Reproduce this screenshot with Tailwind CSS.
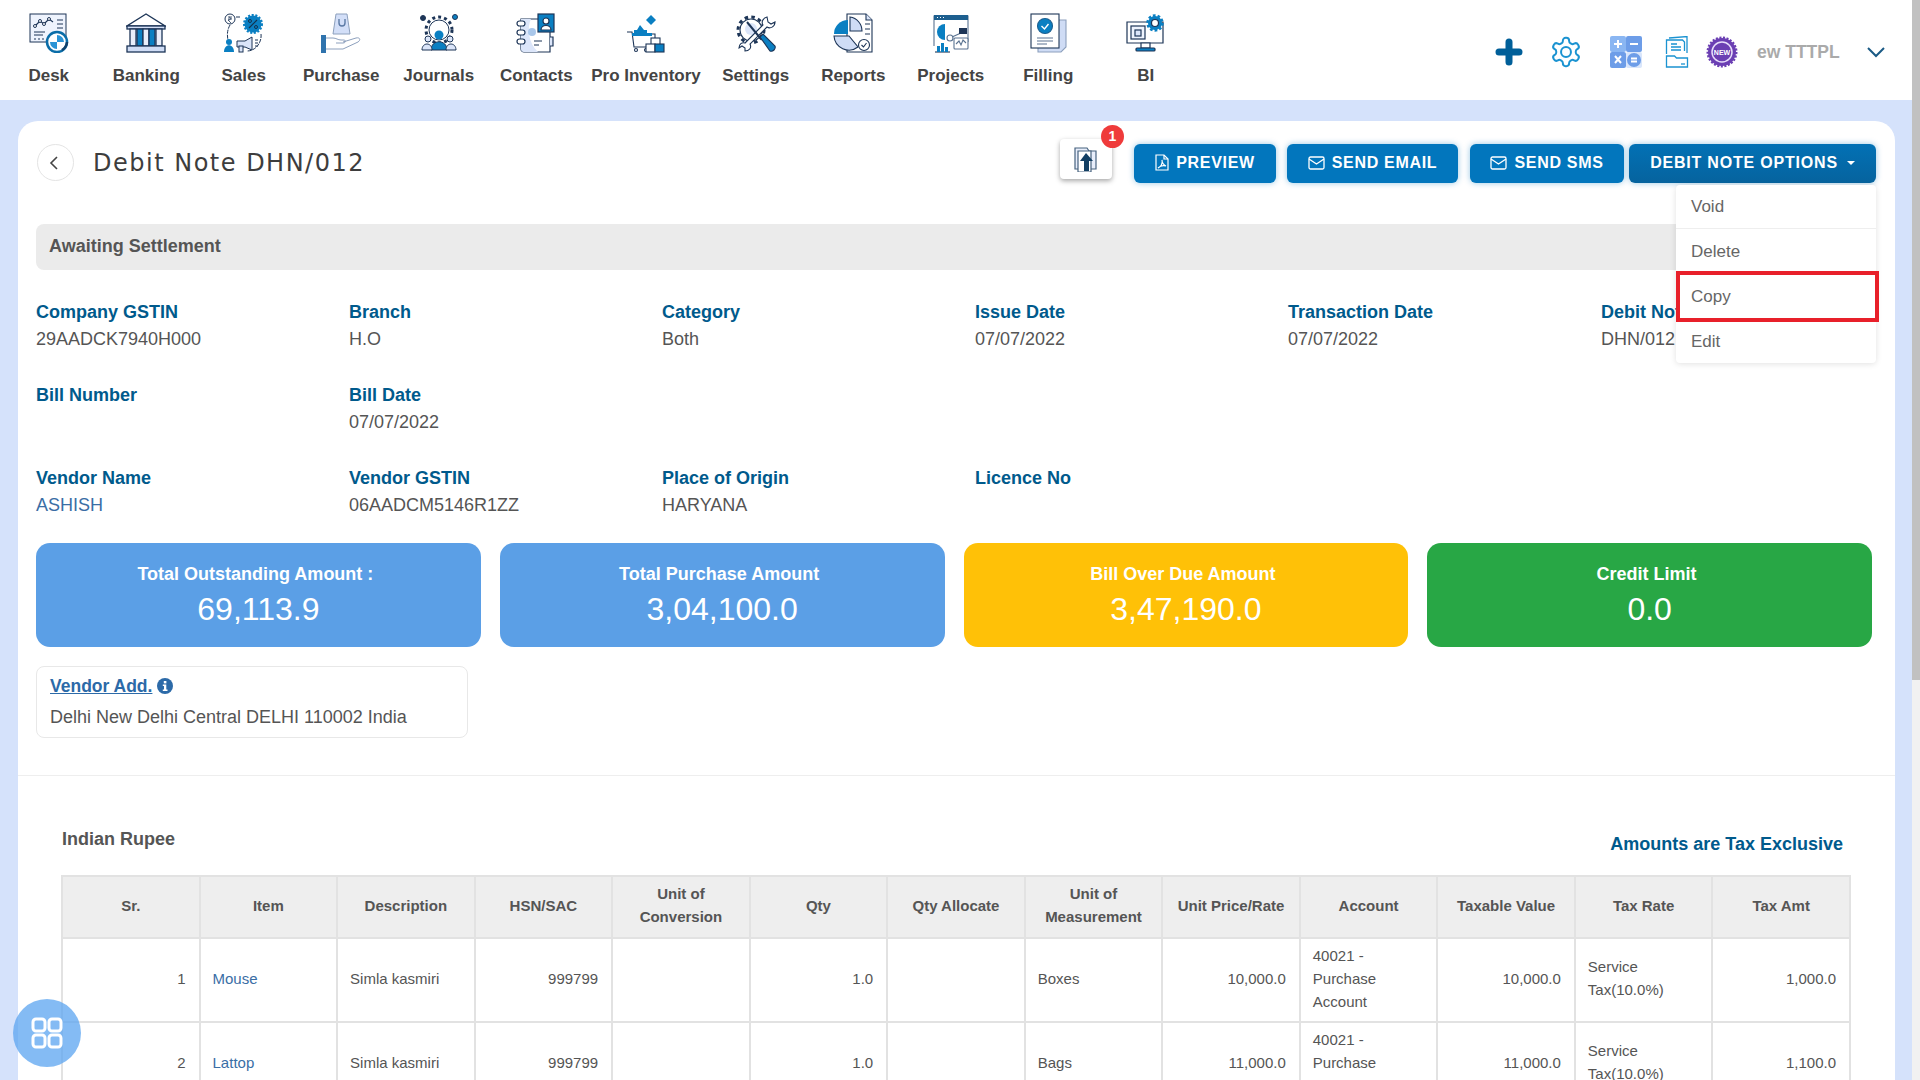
<!DOCTYPE html>
<html lang="en">
<head>
  <meta charset="UTF-8" />
  <title>Debit Note DHN/012</title>
  <script src="https://cdn.jsdelivr.net/npm/@tailwindcss/browser@4"></script>
</head>
<body class="relative w-[1920px] h-[1080px] overflow-hidden bg-[#d5e2fb] font-['Liberation_Sans',Arial,sans-serif] text-[18px] text-[#555]">

  <!-- Top nav -->
  <nav class="flex items-start h-[100px] bg-white">
    <a class="flex flex-col items-center w-[97.5px] pt-[13px]">
      <svg class="w-10 h-10" viewBox="0 0 40 40" fill="none" stroke="#1d3557" stroke-width="1">
        <rect x="1" y="1" width="36" height="28" fill="#eef3fd"/>
        <polyline points="6,13 11,8 15,11 20,6 24,9" stroke-width="1.2"/>
        <circle cx="6" cy="13" r="1.5" fill="#fff"/><circle cx="11" cy="8" r="1.5" fill="#fff"/><circle cx="15" cy="11" r="1.5" fill="#fff"/><circle cx="20" cy="6" r="1.5" fill="#fff"/>
        <path d="M28 7h6M28 11h6M28 15h6M5 19h11M5 22h9M5 26h2M9 26h2M13 26h2"/>
        <circle cx="28" cy="29" r="10" fill="#fff" stroke="#0a6da8" stroke-width="2.5"/>
        <path d="M28 22a7 7 0 0 1 7 7h-7zM28 29h-7a7 7 0 0 0 7 7z" fill="#2a93d5" stroke="none"/>
        <path d="M33 37a10 10 0 0 0 5-8" stroke="#11406a" stroke-width="2.5"/>
      </svg>
      <span class="mt-[11px] text-[17px] leading-[24px] font-bold text-[#444]">Desk</span>
    </a>
    <a class="flex flex-col items-center w-[97.5px] pt-[13px]">
      <svg class="w-10 h-10" viewBox="0 0 40 40" fill="none" stroke="#1d3557" stroke-width="1.3">
        <path d="M20 1 1 13h38z" fill="#fff"/>
        <rect x="1" y="13" width="38" height="3" fill="#d5e0f8"/>
        <rect x="4" y="16" width="6" height="17" fill="#e8eefb"/>
        <rect x="11" y="16" width="6" height="17" fill="#0a7fc2"/>
        <rect x="17" y="16" width="6" height="17" fill="#e8eefb"/>
        <rect x="23" y="16" width="6" height="17" fill="#0a7fc2"/>
        <rect x="30" y="16" width="6" height="17" fill="#e8eefb"/>
        <rect x="1" y="33" width="38" height="6" fill="#cfdcf5"/>
      </svg>
      <span class="mt-[11px] text-[17px] leading-[24px] font-bold text-[#444]">Banking</span>
    </a>
    <a class="flex flex-col items-center w-[97.5px] pt-[13px]">
      <svg class="w-10 h-10" viewBox="0 0 40 40" fill="none" stroke="#1d3557" stroke-width="1">
        <circle cx="29" cy="11" r="8.5" fill="#0a7fc2" stroke="#0a7fc2" stroke-width="3" stroke-dasharray="2 1.5"/>
        <path d="M25 15l8-8" stroke="#12324f" stroke-width="1.2"/>
        <circle cx="26" cy="8" r="1.5" stroke="#12324f"/><circle cx="32" cy="14" r="1.5" stroke="#12324f"/>
        <circle cx="6" cy="6" r="5" fill="#fff"/><path d="M4 4h4M4 6h4M5 4c3 1 2 3-1 3l3 3" stroke-width=".8"/>
        <path d="M12 4h5M6 12c-3 5-3 11-2 15M37 21c1 8-5 17-14 17" stroke-dasharray="4 1"/>
        <circle cx="5" cy="29" r="3" fill="#0a7fc2" stroke="none"/>
        <path d="M0 39c0-9 10-9 10 0z" fill="#0a7fc2" stroke="none"/>
        <path d="M13 28h8l7-4v13l-7-3h-8z" fill="#dbe5f9"/><rect x="15" y="33" width="4" height="6" fill="#dbe5f9"/>
        <path d="M31 27h3M31 30h3M31 33h3"/>
      </svg>
      <span class="mt-[11px] text-[17px] leading-[24px] font-bold text-[#444]">Sales</span>
    </a>
    <a class="flex flex-col items-center w-[97.5px] pt-[13px]">
      <svg class="w-10 h-10" viewBox="0 0 40 40" fill="none" stroke="#8da0bd" stroke-width="1">
        <path d="M15 1h11l3 20H12z" fill="#d3dff8"/>
        <path d="M18 6v4a3 3 0 0 0 6 0V6" stroke="#5c7aa5" stroke-width="1.4"/>
        <rect x="0" y="22" width="5" height="18" fill="#2f73ad" stroke="none"/>
        <path d="M5 25h7c3 0 5 2 8 2h3c2 0 2 3-1 3h-7M22 29l13-4c4-1 5 2 2 4l-15 7H5"/>
      </svg>
      <span class="mt-[11px] text-[17px] leading-[24px] font-bold text-[#444]">Purchase</span>
    </a>
    <a class="flex flex-col items-center w-[97.5px] pt-[13px]">
      <svg class="w-10 h-10" viewBox="0 0 40 40" fill="none" stroke="#1d3557" stroke-width="1">
        <circle cx="20" cy="17" r="13" stroke-width="3" stroke-dasharray="3 3"/>
        <circle cx="20" cy="17" r="10" fill="#fff"/>
        <circle cx="4" cy="5" r="2.5" fill="#1d3557"/><circle cx="36" cy="4" r="2.5" fill="#0a7fc2"/>
        <circle cx="20" cy="22" r="4.5" fill="#0a7fc2" stroke="none"/>
        <path d="M12 37c0-11 16-11 16 0z" fill="#0a7fc2"/>
        <circle cx="9" cy="26" r="3" fill="#dbe5f9"/><path d="M3 37c0-8 10-8 10 0z" fill="#dbe5f9"/>
        <circle cx="31" cy="26" r="3" fill="#dbe5f9"/><path d="M27 37c0-8 10-8 10 0z" fill="#dbe5f9"/>
      </svg>
      <span class="mt-[11px] text-[17px] leading-[24px] font-bold text-[#444]">Journals</span>
    </a>
    <a class="flex flex-col items-center w-[97.5px] pt-[13px]">
      <svg class="w-10 h-10" viewBox="0 0 40 40" fill="none" stroke="#1d3557" stroke-width="1.2">
        <path d="M5 6h29v33H8a3 3 0 0 1-3-3z" fill="#fff"/>
        <path d="M5 6h10c-4 8-3 24 7 33H8a3 3 0 0 1-3-3z" fill="#dce6fa" stroke="none"/>
        <rect x="22" y="1" width="16" height="18" fill="#0a7fc2"/>
        <circle cx="30" cy="8" r="3" fill="#fff"/><path d="M25 17c0-6 10-6 10 0z" fill="#fff"/>
        <rect x="1" y="8" width="8" height="5" rx="2.5" fill="#fff"/><rect x="1" y="17" width="8" height="5" rx="2.5" fill="#fff"/><rect x="1" y="26" width="8" height="5" rx="2.5" fill="#fff"/>
        <circle cx="16" cy="19" r="4" fill="#a9c7ea" stroke="none"/><path d="M18 28h8M18 32h5"/>
        <path d="M34 24h3v9h-3" fill="#dce6fa"/>
      </svg>
      <span class="mt-[11px] text-[17px] leading-[24px] font-bold text-[#444]">Contacts</span>
    </a>
    <a class="flex flex-col items-center w-[122px] pt-[13px]">
      <svg class="w-10 h-10" viewBox="0 0 40 40" fill="none" stroke="#1d3557" stroke-width="1.1">
        <path d="M25 2l5 5-5 5-5-5z" fill="#0a7fc2" stroke="none"/>
        <path d="M14 12l4 5h3v4H8v-4h3z" fill="#0a7fc2" stroke="none"/>
        <path d="M1 19h5l2 15h14M7 21h22v8" />
        <rect x="6" y="20" width="20" height="3" fill="#0a7fc2" stroke="none"/>
        <circle cx="10" cy="37" r="1.5"/><circle cx="20" cy="37" r="1.5"/>
        <rect x="25" y="25" width="9" height="8" fill="#fff"/>
        <rect x="20" y="31" width="9" height="8" fill="#fff"/>
        <rect x="29" y="31" width="9" height="8" fill="#0a7fc2"/>
      </svg>
      <span class="mt-[11px] text-[17px] leading-[24px] font-bold text-[#444] whitespace-nowrap">Pro Inventory</span>
    </a>
    <a class="flex flex-col items-center w-[97.5px] pt-[13px]">
      <svg class="w-10 h-10" viewBox="0 0 40 40" fill="none" stroke="#1d3557" stroke-width="1.1">
        <circle cx="15" cy="17" r="13" stroke-width="3" stroke-dasharray="3.5 3.3"/>
        <circle cx="15" cy="17" r="11" fill="#fff"/>
        <circle cx="15" cy="16" r="6" fill="#dbe5f9" stroke="none"/>
        <path d="M31 4c-4 1-6 5-4 8L9 30c-3-1-6 1-6 5l3-2 3 2 0 3c4 0 7-3 5-7L31 14c3 2 8 0 8-5l-4 2-3-2z" fill="#fff"/>
        <path d="M11 9l14 17" stroke-width="2"/>
        <path d="M24 24l3-3 12 12c1 3-2 6-5 5z" fill="#0a7fc2"/>
      </svg>
      <span class="mt-[11px] text-[17px] leading-[24px] font-bold text-[#444]">Settings</span>
    </a>
    <a class="flex flex-col items-center w-[97.5px] pt-[13px]">
      <svg class="w-10 h-10" viewBox="0 0 40 40" fill="none" stroke="#1d3557" stroke-width="1.1">
        <path d="M14 1h19l6 6v32H14z" fill="#fff"/>
        <path d="M33 1v6h6" fill="#dbe5f9"/>
        <path d="M32 11h5M32 16h5M32 21h5"/>
        <path d="M15 7v14H1A14 14 0 0 1 15 7z" fill="#0a7fc2" stroke="none"/>
        <path d="M17 4a14 14 0 0 1 12 14H17z" fill="#cfdcf5"/>
        <path d="M1 23h15l9 11a15 15 0 0 1-24-11z" fill="#cfdcf5"/>
        <circle cx="31" cy="32" r="5.5" fill="#fff"/><path d="M28.5 32l2 2 3-4"/>
      </svg>
      <span class="mt-[11px] text-[17px] leading-[24px] font-bold text-[#444]">Reports</span>
    </a>
    <a class="flex flex-col items-center w-[97.5px] pt-[13px]">
      <svg class="w-10 h-10" viewBox="0 0 40 40" fill="none" stroke="#5a7391" stroke-width="1.1">
        <path d="M3 33V3h34v26" fill="#fff"/>
        <rect x="3" y="2" width="34" height="5" fill="#1d5f8f" stroke="none"/>
        <path d="M6 4.500h1M9 4.500h1M12 4.500h1" stroke="#fff"/>
        <path d="M14 11a8 8 0 0 0 0 16z" fill="#0a7fc2" stroke="none"/>
        <circle cx="19" cy="25" r="3" fill="#fff"/><path d="M21 24l9-4"/>
        <rect x="28" y="15" width="8" height="6" fill="#1d3557" stroke="none"/>
        <rect x="23" y="25" width="14" height="11" rx="1" fill="#fff"/><path d="M25 31l3-3 2 4 2-5 3 3"/>
        <path d="M4 39h15" stroke="#1d3557"/>
        <path d="M6 33h3v6H6zM10 30h3v9h-3zM14 34h3v5h-3z" fill="#0a7fc2" stroke="none"/>
      </svg>
      <span class="mt-[11px] text-[17px] leading-[24px] font-bold text-[#444]">Projects</span>
    </a>
    <a class="flex flex-col items-center w-[97.5px] pt-[13px]">
      <svg class="w-10 h-10" viewBox="0 0 40 40" fill="none" stroke="#1d3557" stroke-width="1.1">
        <path d="M10 7h28v27l-5 5H10z" fill="#cfdcf5" stroke="#8da0bd"/>
        <rect x="3" y="1" width="28" height="34" fill="#fff"/>
        <circle cx="17" cy="13" r="7.500" fill="#0a7fc2" stroke="#1d5f8f"/>
        <path d="M13.500 13l3 3 4-5" stroke="#fff" stroke-width="1.4"/>
        <path d="M9 25h16M9 28h16M9 31h10" stroke="#5a7391"/>
      </svg>
      <span class="mt-[11px] text-[17px] leading-[24px] font-bold text-[#444]">Filling</span>
    </a>
    <a class="flex flex-col items-center w-[97.5px] pt-[13px]">
      <svg class="w-10 h-10" viewBox="0 0 40 40" fill="none" stroke="#1d3557" stroke-width="1.2">
        <path d="M1 9h36v21H1z" fill="#fff"/>
        <path d="M15 30h9v5h-9z" fill="#fff"/>
        <rect x="10" y="35" width="19" height="3" rx="1" fill="#0a7fc2"/>
        <rect x="5" y="13" width="14" height="13" fill="#eef3fd"/><rect x="9" y="17" width="6" height="6" fill="#dbe5f9"/>
        <circle cx="29" cy="10" r="7" fill="#0a7fc2" stroke="#0a7fc2" stroke-width="3.500" stroke-dasharray="2.500 1.900"/>
        <circle cx="29" cy="10" r="3.500" fill="#fff"/>
      </svg>
      <span class="mt-[11px] text-[17px] leading-[24px] font-bold text-[#444]">BI</span>
    </a>

    <!-- Right side tools -->
    <div class="flex items-center ml-auto mr-[35px] mt-[34px] h-[36px]">
      <svg class="w-[28px] h-[28px]" viewBox="0 0 28 28" fill="none" stroke="#005f99" stroke-width="7" stroke-linecap="round"><path d="M14 4v20M4 14h20"/></svg>
      <svg class="w-[34px] h-[34px] ml-[26px]" viewBox="0 0 24 24" fill="none" stroke="#1b93d1" stroke-width="1.4" stroke-linejoin="round">
        <path d="M12.220 2h-.44a2 2 0 0 0-2 2v.18a2 2 0 0 1-1 1.730l-.43.25a2 2 0 0 1-2 0l-.15-.08a2 2 0 0 0-2.730.73l-.22.38a2 2 0 0 0 .73 2.730l.15.1a2 2 0 0 1 1 1.720v.51a2 2 0 0 1-1 1.740l-.15.09a2 2 0 0 0-.73 2.730l.22.38a2 2 0 0 0 2.730.73l.15-.08a2 2 0 0 1 2 0l.43.25a2 2 0 0 1 1 1.730V20a2 2 0 0 0 2 2h.44a2 2 0 0 0 2-2v-.18a2 2 0 0 1 1-1.730l.43-.25a2 2 0 0 1 2 0l.15.08a2 2 0 0 0 2.730-.73l.22-.39a2 2 0 0 0-.73-2.730l-.15-.08a2 2 0 0 1-1-1.740v-.5a2 2 0 0 1 1-1.740l.15-.09a2 2 0 0 0 .73-2.730l-.22-.38a2 2 0 0 0-2.730-.73l-.15.08a2 2 0 0 1-2 0l-.43-.25a2 2 0 0 1-1-1.730V4a2 2 0 0 0-2-2z"/>
        <circle cx="12" cy="12" r="3.500"/>
      </svg>
      <svg class="w-[32px] h-[32px] ml-[27px]" viewBox="0 0 32 32" fill="none" stroke="#fff" stroke-width="2">
        <rect x="0" y="0" width="16" height="16" rx="2" fill="#8ab6f2" stroke="none"/>
        <rect x="16" y="0" width="16" height="16" rx="2" fill="#6d9de8" stroke="none"/>
        <rect x="0" y="16" width="16" height="16" rx="2" fill="#6d9de8" stroke="none"/>
        <rect x="16" y="16" width="16" height="16" rx="2" fill="#d9e6fb" stroke="none"/>
        <circle cx="24" cy="24" r="7" fill="#6d9de8" stroke="none"/>
        <path d="M8 4v8M4 8h8M20 8h8M5 20l6 7M11 20l-6 7M21 22.500h6M21 25.500h6"/>
      </svg>
      <svg class="w-[24px] h-[32px] ml-[23px]" viewBox="0 0 24 32" fill="none" stroke="#1b93d1" stroke-width="1.300">
        <path d="M4 2l18-1.500V17" />
        <path d="M1.500 18V4h16l2 2v9"/>
        <path d="M6 8h6M6 11h10M6 14h10"/>
        <path d="M1.500 20h8l2 2h11v9h-21z"/><path d="M16 28h4"/>
      </svg>
      <svg class="w-[32px] h-[32px] ml-[17px]" viewBox="0 0 32 32">
        <circle cx="16" cy="16" r="14" fill="#6b3fb3" stroke="#6b3fb3" stroke-width="3" stroke-dasharray="2 1.500"/>
        <circle cx="16" cy="16" r="10" fill="#6b3fb3" stroke="#e7defa" stroke-width="1.500"/>
        <text x="16" y="18.500" text-anchor="middle" font-size="7" font-weight="700" fill="#fff">NEW</text>
      </svg>
      <span class="ml-[19px] w-[110px] text-[17.500px] font-bold text-[#aaa] whitespace-nowrap">ew TTTPL</span>
      <svg class="w-[18px] h-[11px]" viewBox="0 0 18 11" fill="none" stroke="#1a5a85" stroke-width="2"><path d="M1 1l8 8 8-8"/></svg>
    </div>
  </nav>

  <!-- Main card -->
  <main class="relative w-[1877px] ml-[18px] mt-[21px] pt-[23px] bg-white rounded-[20px]">

    <!-- Title row -->
    <div class="flex items-center h-[39px] pl-[19px] pr-[19px]">
      <button class="flex items-center justify-center w-[37px] h-[37px] mb-[2px] pr-[3px] rounded-full border border-[#e4e4e4]">
        <svg class="w-[12px] h-[16px]" viewBox="0 0 12 16" fill="none" stroke="#444" stroke-width="1.600"><path d="M9 2 3 8l6 6"/></svg>
      </button>
      <h1 class="ml-[19px] mb-[2px] font-['DejaVu_Sans',sans-serif] text-[24px] tracking-[1.5px] text-[#3d3d3d]">Debit Note DHN/012</h1>

      <!-- Attachment button with badge -->
      <div class="relative ml-auto mr-[22px] mt-[-10px] flex items-center justify-center w-[52px] h-[40px] bg-white rounded-[4px] shadow-[0_2px_5px_rgba(0,0,0,0.35)]">
        <svg class="w-[26px] h-[26px]" viewBox="0 0 26 26" fill="none" stroke="#46627f" stroke-width="1.200">
          <path d="M2 2h12l2 3h7v18H2z" fill="#e8eefb"/>
          <path d="M5 5h13v21H5z" fill="#fff"/>
          <path d="M13 7 7 15h4v10h5V15h4z" fill="#123f63" stroke="none"/>
        </svg>
        <span class="absolute top-[-14px] right-[-12px] flex items-center justify-center w-[23px] h-[23px] rounded-full bg-[#ef3b3b] text-white text-[14px] font-bold">1</span>
      </div>

      <button class="flex items-center justify-center w-[142px] h-[39px] pb-[2px] rounded-[6px] bg-[#0276bd] text-white text-[16px] font-bold tracking-[0.7px] shadow-[0_0_6px_rgba(2,118,189,0.4)]">
        <svg class="w-[14px] h-[17px] mr-[7px]" viewBox="0 0 14 17" fill="none" stroke="#fff" stroke-width="1.200"><path d="M1 1h8l4 4v11H1z"/><path d="M9 1v4h4M3 14c3-1 5-5 4-8 0 3 2 5 4 6-3-1-6 0-8 2z"/></svg>
        PREVIEW
      </button>
      <button class="flex items-center justify-center w-[171px] h-[39px] ml-[11px] pb-[2px] rounded-[6px] bg-[#0276bd] text-white text-[16px] font-bold tracking-[0.7px] shadow-[0_0_6px_rgba(2,118,189,0.4)]">
        <svg class="w-[17px] h-[14px] mr-[7px]" viewBox="0 0 17 14" fill="none" stroke="#fff" stroke-width="1.300"><rect x="1" y="1" width="15" height="12" rx="1.500"/><path d="M1 3l7.500 5L16 3"/></svg>
        SEND EMAIL
      </button>
      <button class="flex items-center justify-center w-[154px] h-[39px] ml-[12px] pb-[2px] rounded-[6px] bg-[#0276bd] text-white text-[16px] font-bold tracking-[0.7px] shadow-[0_0_6px_rgba(2,118,189,0.4)]">
        <svg class="w-[17px] h-[14px] mr-[7px]" viewBox="0 0 17 14" fill="none" stroke="#fff" stroke-width="1.300"><rect x="1" y="1" width="15" height="12" rx="1.500"/><path d="M1 3l7.500 5L16 3"/></svg>
        SEND SMS
      </button>
      <button class="flex items-center justify-center w-[247px] h-[39px] ml-[5px] pb-[2px] rounded-[6px] bg-gradient-to-b from-[#0271b5] to-[#06639e] text-white text-[16px] font-bold tracking-[0.8px] shadow-[0_0_6px_rgba(2,118,189,0.4)]">
        DEBIT NOTE OPTIONS
        <span class="ml-[9px] w-0 h-0 border-x-[4px] border-x-transparent border-t-[4px] border-t-white"></span>
      </button>
    </div>

    <!-- Dropdown menu -->
    <ul class="absolute z-10 top-[64px] left-[1658px] w-[200px] h-[178px] bg-white rounded-[4px] shadow-[0_1px_6px_rgba(0,0,0,0.12)] text-[17px] text-[#666]">
      <li class="flex items-center h-[44px] pl-[15px] border-b border-[#eee]">Void</li>
      <li class="flex items-center h-[45px] pl-[15px]">Delete</li>
      <li class="relative flex items-center h-[45px] pl-[15px]">Copy
        <span class="absolute top-[-3px] left-0 w-[203px] h-[51px] border-[4px] border-[#e8202a]"></span>
      </li>
      <li class="flex items-center h-[44px] pl-[15px] pt-[2px]">Edit</li>
    </ul>

    <!-- Status -->
    <div class="flex items-center h-[46px] mt-[41px] ml-[18px] w-[1840px] pl-[13px] pb-[2px] bg-[#ebebeb] rounded-[8px] font-bold">Awaiting Settlement</div>

    <!-- Details -->
    <div class="grid grid-cols-[repeat(6,313px)] gap-y-[29px] mt-[29px] ml-[18px] leading-[27px]">
      <div><div class="font-bold text-[#005a8c]">Company GSTIN</div><div>29AADCK7940H000</div></div>
      <div><div class="font-bold text-[#005a8c]">Branch</div><div>H.O</div></div>
      <div><div class="font-bold text-[#005a8c]">Category</div><div>Both</div></div>
      <div><div class="font-bold text-[#005a8c]">Issue Date</div><div>07/07/2022</div></div>
      <div><div class="font-bold text-[#005a8c]">Transaction Date</div><div>07/07/2022</div></div>
      <div><div class="font-bold text-[#005a8c] whitespace-nowrap">Debit Note No</div><div>DHN/012</div></div>

      <div><div class="font-bold text-[#005a8c]">Bill Number</div><div class="h-[27px]"></div></div>
      <div class="col-span-5"><div class="font-bold text-[#005a8c]">Bill Date</div><div>07/07/2022</div></div>

      <div><div class="font-bold text-[#005a8c]">Vendor Name</div><div class="text-[#3a6ea5]">ASHISH</div></div>
      <div><div class="font-bold text-[#005a8c]">Vendor GSTIN</div><div>06AADCM5146R1ZZ</div></div>
      <div><div class="font-bold text-[#005a8c]">Place of Origin</div><div>HARYANA</div></div>
      <div><div class="font-bold text-[#005a8c]">Licence No</div></div>
    </div>

    <!-- Amount cards -->
    <div class="grid grid-cols-4 gap-x-[19px] w-[1836px] h-[104px] mt-[24px] ml-[18px] text-white text-center">
      <div class="flex flex-col items-center rounded-[14px] bg-[#5b9fe6] pt-[19px]">
        <div class="pr-[6px] font-bold leading-[24px]">Total Outstanding Amount :</div>
        <div class="mt-[4px] text-[32px] leading-[38px]">69,113.9</div>
      </div>
      <div class="flex flex-col items-center rounded-[14px] bg-[#5b9fe6] pt-[19px]">
        <div class="pr-[6px] font-bold leading-[24px]">Total Purchase Amount</div>
        <div class="mt-[4px] text-[32px] leading-[38px]">3,04,100.0</div>
      </div>
      <div class="flex flex-col items-center rounded-[14px] bg-[#ffc107] pt-[19px]">
        <div class="pr-[6px] font-bold leading-[24px]">Bill Over Due Amount</div>
        <div class="mt-[4px] text-[32px] leading-[38px]">3,47,190.0</div>
      </div>
      <div class="flex flex-col items-center rounded-[14px] bg-[#28a745] pt-[19px]">
        <div class="pr-[6px] font-bold leading-[24px]">Credit Limit</div>
        <div class="mt-[4px] text-[32px] leading-[38px]">0.0</div>
      </div>
    </div>

    <!-- Vendor address -->
    <div class="w-[432px] h-[72px] mt-[19px] ml-[18px] pl-[13px] pt-[6px] border border-[#e8e8e8] rounded-[8px]">
      <div class="flex items-center leading-[26px]">
        <a class="font-bold text-[17.500px] text-[#2c6aa8] underline">Vendor Add.</a>
        <svg class="w-[16px] h-[16px] ml-[5px]" viewBox="0 0 16 16"><circle cx="8" cy="8" r="8" fill="#2c6aa8"/><rect x="6.800" y="3" width="2.600" height="2.400" fill="#fff"/><path d="M5.800 6.500h3.500v5h1.200v1.500H5.800v-1.500H7v-3.500H5.800z" fill="#fff"/></svg>
      </div>
      <div class="mt-[5px] leading-[26px]">Delhi New Delhi Central DELHI 110002 India</div>
    </div>

    <hr class="mt-[37px] border-[#eee]" />

    <!-- Table heading -->
    <div class="flex items-center justify-between h-[26px] mt-[50px] ml-[44px] mr-[52px]">
      <span class="font-bold">Indian Rupee</span>
      <span class="mt-[10px] font-bold text-[#005a8c]">Amounts are Tax Exclusive</span>
    </div>

    <!-- Items table -->
    <table class="table-fixed w-[1790px] mt-[23px] ml-[43px] border-collapse border-2 border-[#e2e2e2] text-[15px] [&_th]:pb-[4px] [&_td]:pb-[4px] [&_td]:pl-[12px]">
      <thead class="bg-[#eee] font-bold">
        <tr class="h-[62px] leading-[23px]">
          <th class="border-2 border-[#e2e2e2]">Sr.</th>
          <th class="border-2 border-[#e2e2e2]">Item</th>
          <th class="border-2 border-[#e2e2e2]">Description</th>
          <th class="border-2 border-[#e2e2e2]">HSN/SAC</th>
          <th class="border-2 border-[#e2e2e2]">Unit of<br />Conversion</th>
          <th class="border-2 border-[#e2e2e2]">Qty</th>
          <th class="border-2 border-[#e2e2e2]">Qty Allocate</th>
          <th class="border-2 border-[#e2e2e2]">Unit of<br />Measurement</th>
          <th class="border-2 border-[#e2e2e2]">Unit Price/Rate</th>
          <th class="border-2 border-[#e2e2e2]">Account</th>
          <th class="border-2 border-[#e2e2e2]">Taxable Value</th>
          <th class="border-2 border-[#e2e2e2]">Tax Rate</th>
          <th class="border-2 border-[#e2e2e2]">Tax Amt</th>
        </tr>
      </thead>
      <tbody class="leading-[23px]">
        <tr class="h-[84px]">
          <td class="border-2 border-[#e2e2e2] px-[13px] text-right">1</td>
          <td class="border-2 border-[#e2e2e2] px-[13px] text-[#3a6ea5]">Mouse</td>
          <td class="border-2 border-[#e2e2e2] px-[13px]">Simla kasmiri</td>
          <td class="border-2 border-[#e2e2e2] px-[13px] text-right">999799</td>
          <td class="border-2 border-[#e2e2e2] px-[13px]"></td>
          <td class="border-2 border-[#e2e2e2] px-[13px] text-right">1.0</td>
          <td class="border-2 border-[#e2e2e2] px-[13px]"></td>
          <td class="border-2 border-[#e2e2e2] px-[13px]">Boxes</td>
          <td class="border-2 border-[#e2e2e2] px-[13px] text-right">10,000.0</td>
          <td class="border-2 border-[#e2e2e2] px-[13px]">40021 - Purchase Account</td>
          <td class="border-2 border-[#e2e2e2] px-[13px] text-right">10,000.0</td>
          <td class="border-2 border-[#e2e2e2] px-[13px]">Service Tax(10.0%)</td>
          <td class="border-2 border-[#e2e2e2] px-[13px] text-right">1,000.0</td>
        </tr>
        <tr class="h-[84px]">
          <td class="border-2 border-[#e2e2e2] px-[13px] text-right">2</td>
          <td class="border-2 border-[#e2e2e2] px-[13px] text-[#3a6ea5]">Lattop</td>
          <td class="border-2 border-[#e2e2e2] px-[13px]">Simla kasmiri</td>
          <td class="border-2 border-[#e2e2e2] px-[13px] text-right">999799</td>
          <td class="border-2 border-[#e2e2e2] px-[13px]"></td>
          <td class="border-2 border-[#e2e2e2] px-[13px] text-right">1.0</td>
          <td class="border-2 border-[#e2e2e2] px-[13px]"></td>
          <td class="border-2 border-[#e2e2e2] px-[13px]">Bags</td>
          <td class="border-2 border-[#e2e2e2] px-[13px] text-right">11,000.0</td>
          <td class="border-2 border-[#e2e2e2] px-[13px]">40021 - Purchase Account</td>
          <td class="border-2 border-[#e2e2e2] px-[13px] text-right">11,000.0</td>
          <td class="border-2 border-[#e2e2e2] px-[13px]">Service Tax(10.0%)</td>
          <td class="border-2 border-[#e2e2e2] px-[13px] text-right">1,100.0</td>
        </tr>
      </tbody>
    </table>
  </main>

  <!-- Floating apps button -->
  <button class="absolute left-[13px] top-[999px] flex items-center justify-center w-[68px] h-[68px] rounded-full bg-[#5ba4f0]/75">
    <svg class="w-[32px] h-[32px]" viewBox="0 0 32 32" fill="none" stroke="#fff" stroke-width="3"><rect x="2" y="2" width="12" height="12" rx="3"/><rect x="18" y="2" width="12" height="12" rx="3"/><rect x="2" y="18" width="12" height="12" rx="3"/><rect x="18" y="18" width="12" height="12" rx="3"/></svg>
  </button>

  <!-- Page scrollbar -->
  <div class="absolute top-0 right-0 w-[8px] h-[1080px] bg-[#f1f1f1]">
    <div class="w-[8px] h-[680px] bg-[#c1c1c1]"></div>
  </div>
</body>
</html>
